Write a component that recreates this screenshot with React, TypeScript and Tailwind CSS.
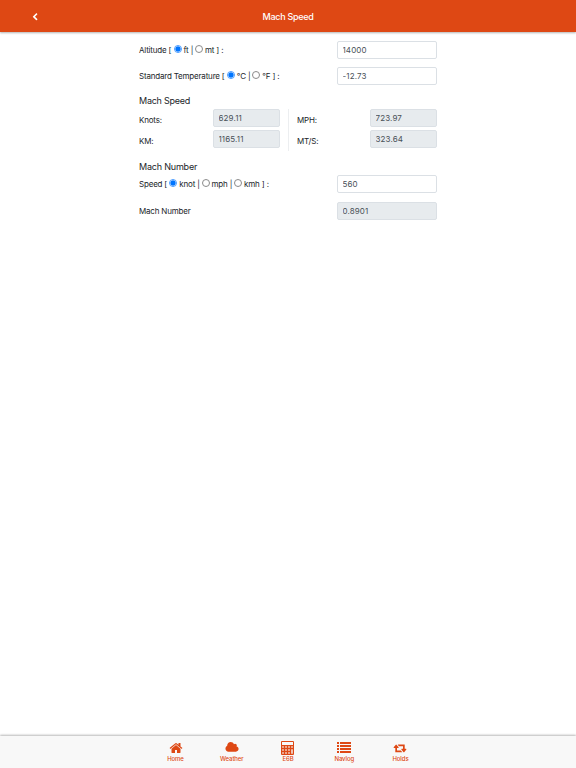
import { useState } from "react";

const RadioOption = ({
  name,
  label,
  checked,
  onSelect,
}: {
  name: string;
  label: string;
  checked: boolean;
  onSelect: () => void;
}) => (
  <label className="flex items-center gap-x-[2px]">
    <input
      type="radio"
      name={name}
      checked={checked}
      onChange={onSelect}
      className="mb-[2px] h-[8px] w-[8px] shrink-0 appearance-none rounded-full border-[0.5px] border-[#8a8a8a] bg-white checked:border-[#4a9cff] checked:bg-[radial-gradient(circle,#0075ff_2.2px,#fff_3.1px)]"
    />
    <span>{label}</span>
  </label>
);

const UnitPicker = ({
  title,
  name,
  units,
}: {
  title: string;
  name: string;
  units: string[];
}) => {
  const [unit, setUnit] = useState(units[0]);

  return (
    <div className="flex items-center gap-x-[2.2px] whitespace-nowrap">
      <span>{title} [</span>
      {units.map((item, index) => (
        <div key={item} className="flex items-center gap-x-[1.8px]">
          {index > 0 && <span>|</span>}
          <RadioOption
            name={name}
            label={item}
            checked={unit === item}
            onSelect={() => setUnit(item)}
          />
        </div>
      ))}
      <span>] :</span>
    </div>
  );
};

const Field = ({ value, readOnly }: { value: string; readOnly?: boolean }) => (
  <input
    type="text"
    defaultValue={value}
    readOnly={readOnly}
    className="block h-[18px] w-full rounded-[2px] border border-[#dbe0e5] bg-white px-[4.5px] text-[8px] tracking-[0.12px] text-[#495057] outline-none read-only:bg-[#e7ebee]"
  />
);

const HomeIcon = () => (
  <svg viewBox="0 0 1792 1792" className="h-[14px] w-[14px]" fill="currentColor">
    <path d="M1472 992v480q0 26-19 45t-45 19h-384v-384h-256v384h-384q-26 0-45-19t-19-45v-480q0-1 .5-3t.5-3l575-474 575 474q1 2 1 6zm223-69l-62 74q-8 9-21 11h-3q-13 0-21-7l-692-577-692 577q-12 8-24 7-13-2-21-11l-62-74q-8-10-7-23.5t11-21.5l719-599q32-26 76-26t76 26l244 204v-195q0-14 9-23t23-9h192q14 0 23 9t9 23v408l219 182q10 8 11 21.5t-7 23.5z" />
  </svg>
);

const CloudIcon = () => (
  <svg viewBox="0 0 2048 1792" className="h-[12.5px] w-[14px]" fill="currentColor">
    <path d="M1984 1152q0 159-112.5 271.5t-271.5 112.5h-1088q-185 0-316.5-131.5t-131.5-316.5q0-132 71-241.5t187-163.5q-2-28-2-43 0-212 150-362t362-150q158 0 286.5 88t187.5 230q70-62 166-62 106 0 181 75t75 181q0 75-41 138 129 30 213 134.5t84 239.5z" />
  </svg>
);

const CalculatorIcon = () => (
  <svg viewBox="0 0 13 14" className="mr-px h-[14px] w-[13px]" fill="currentColor">
    <path
      fillRule="evenodd"
      d="M1 0h11a1 1 0 0 1 1 1v12a1 1 0 0 1-1 1H1a1 1 0 0 1-1-1V1a1 1 0 0 1 1-1zM1 1v3h11V1zM1.3 5.3v1.4h1.4V5.3zM4.3 5.3v1.4h1.4V5.3zM7.3 5.3v1.4h1.4V5.3zM10.3 5.3v1.4h1.4V5.3zM1.3 8.3v1.4h1.4V8.3zM4.3 8.3v1.4h1.4V8.3zM7.3 8.3v1.4h1.4V8.3zM10.3 8.3v4.4h1.4V8.3zM1.3 11.3v1.4h1.4v-1.4zM4.3 11.3v1.4h1.4v-1.4zM7.3 11.3v1.4h1.4v-1.4z"
    />
  </svg>
);

const ListIcon = () => (
  <svg viewBox="0 0 14 11" className="h-[11px] w-[14px]" fill="currentColor">
    <path d="M0 0h2v2H0zM3 0h11v2H3zM0 3h2v2H0zM3 3h11v2H3zM0 6h2v2H0zM3 6h11v2H3zM0 9h2v2H0zM3 9h11v2H3z" />
  </svg>
);

const RetweetIcon = () => (
  <svg viewBox="0 0 2048 1792" className="mr-px h-[12px] w-[14px]" fill="currentColor">
    <path d="M1344 1504q0 13-9.5 22.5t-22.5 9.5h-960q-8 0-13.5-2t-9-7-5.5-8-3-11.5-1-11.5v-600h-192q-26 0-45-19t-19-45q0-24 15-41l320-384q19-22 49-22t49 22l320 384q15 17 15 41 0 26-19 45t-45 19h-192v384h576q16 0 25 11l160 192q7 10 7 21zm640-416q0 24-15 41l-320 384q-20 23-49 23t-49-23l-320-384q-15-17-15-41 0-26 19-45t45-19h192v-384h-576q-16 0-25-12l-160-192q-7-9-7-20 0-13 9.5-22.5t22.5-9.5h960q8 0 13.5 2t9 7 5.5 8 3 11.5 1 11.5v600h192q26 0 45 19t19 45z" />
  </svg>
);

const tabs = [
  { label: "Home", icon: <HomeIcon /> },
  { label: "Weather", icon: <CloudIcon /> },
  { label: "E6B", icon: <CalculatorIcon /> },
  { label: "Navlog", icon: <ListIcon /> },
  { label: "Holds", icon: <RetweetIcon /> },
];

const speeds = [
  [
    { label: "Knots:", value: "629.11" },
    { label: "KM:", value: "1165.11" },
  ],
  [
    { label: "MPH:", value: "723.97" },
    { label: "MT/S:", value: "323.64" },
  ],
];

const App = () => {
  return (
    <div className="flex h-screen flex-col bg-white font-['Inter','Liberation_Sans',sans-serif] text-[8px] leading-[12px] tracking-[-0.19px] text-[#212529]">
      {/* HEADER */}
      <header className="grid h-[31.5px] shrink-0 grid-cols-3 items-center bg-[#de4814] text-white shadow-[0_1px_2px_rgba(0,0,0,0.3)]">
        <button aria-label="Back" className="ml-[31px] mt-[2px] w-[9px]">
          <svg viewBox="0 0 1792 1792" className="h-[8px] w-[8px]" fill="currentColor">
            <path d="M1427 301l-531 531 531 531q19 19 19 45t-19 45l-166 166q-19 19-45 19t-45-19l-742-742q-19-19-19-45t19-45l742-742q19-19 45-19t45 19l166 166q19 19 19 45t-19 45z" />
          </svg>
        </button>
        <h1 className="mt-[2px] text-center text-[9px] font-medium tracking-[-0.3px]">
          Mach Speed
        </h1>
      </header>

      <main className="mx-auto w-[298px] grow pt-[9px]">
        {/* ALTITUDE + TEMPERATURE */}
        <div className="mb-[8.5px] flex items-center justify-between">
          <UnitPicker title="Altitude" name="altitude" units={["ft", "mt"]} />
          <div className="w-[100px]">
            <Field value="14000" />
          </div>
        </div>
        <div className="flex items-center justify-between">
          <UnitPicker
            title="Standard Temperature"
            name="temperature"
            units={["°C", "°F"]}
          />
          <div className="w-[100px]">
            <Field value="-12.73" />
          </div>
        </div>

        {/* MACH SPEED */}
        <h2 className="mt-[9px] text-[9px] leading-[14px] tracking-[-0.25px]">
          Mach Speed
        </h2>
        <div className="mt-px flex">
          {speeds.map((column, index) => (
            <div
              key={index}
              className="w-[149px] space-y-[3px] pb-[3px] first:pr-[8px] last:border-l last:border-[#eceef0] last:pl-[8px]"
            >
              {column.map((speed) => (
                <div key={speed.label} className="flex justify-between">
                  <span className="pt-[5px]">{speed.label}</span>
                  <div className="w-[67px]">
                    <Field value={speed.value} readOnly />
                  </div>
                </div>
              ))}
            </div>
          ))}
        </div>

        {/* MACH NUMBER */}
        <h2 className="mt-[9px] text-[9px] leading-[14px] tracking-[-0.2px]">
          Mach Number
        </h2>
        <div className="mt-px mb-[8.5px] flex items-center justify-between">
          <UnitPicker title="Speed" name="speed" units={["knot", "mph", "kmh"]} />
          <div className="w-[100px]">
            <Field value="560" />
          </div>
        </div>
        <div className="flex items-center justify-between">
          <span>Mach Number</span>
          <div className="w-[100px]">
            <Field value="0.8901" readOnly />
          </div>
        </div>
      </main>

      {/* BOTTOM TABS */}
      <nav className="flex h-[32px] shrink-0 justify-center bg-[#f8f8f8] shadow-[0_-1px_2px_rgba(0,0,0,0.28)]">
        {tabs.map((tab) => (
          <button
            key={tab.label}
            className="flex w-[56.25px] flex-col items-center text-[#de4814]"
          >
            <span className="mt-[4px] flex h-[15px] items-center">{tab.icon}</span>
            <span className="text-[6px] leading-[7px] font-medium tracking-[-0.1px]">
              {tab.label}
            </span>
          </button>
        ))}
      </nav>
    </div>
  );
};

export default App;
